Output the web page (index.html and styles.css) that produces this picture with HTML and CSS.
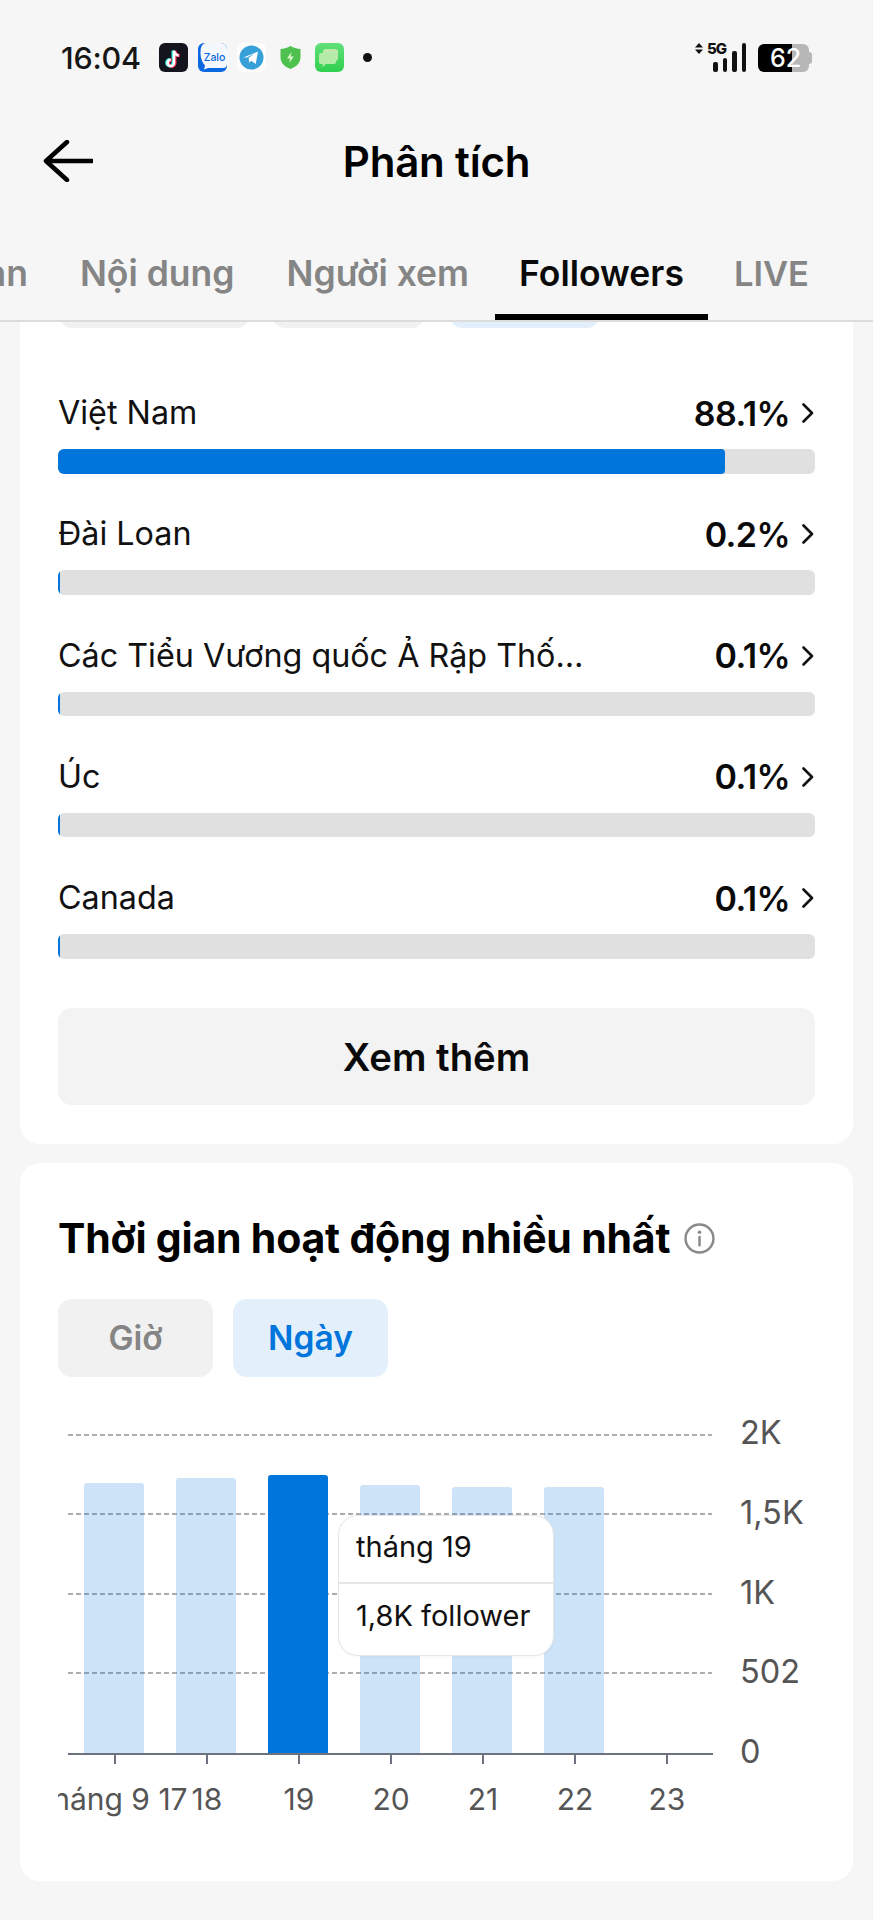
FILE: index.html
```html
<!DOCTYPE html>
<html lang="vi">
<head>
<meta charset="utf-8">
<title>Phân tích</title>
<link rel="stylesheet" href="styles.css">
</head>
<body>
<div class="screen">
  <header class="top">
    <div class="status">
      <span class="time">16:04</span>
      <div class="apps">
        <svg class="app" viewBox="0 0 29 29"><rect width="29" height="29" rx="6" fill="#14141f"/><path d="M15 7v12.2a3.2 3.2 0 1 1-3.2-3.2M15 7c.3 2.7 2 4.4 4.7 4.7" fill="none" stroke="#25f4ee" stroke-width="3" transform="translate(-1 .5)"/><path d="M15 7v12.2a3.2 3.2 0 1 1-3.2-3.2M15 7c.3 2.7 2 4.4 4.7 4.7" fill="none" stroke="#fe2c55" stroke-width="3" transform="translate(1 1)"/><path d="M15 7v12.2a3.2 3.2 0 1 1-3.2-3.2M15 7c.3 2.7 2 4.4 4.7 4.7" fill="none" stroke="#fff" stroke-width="2.6" transform="translate(0 .7)"/></svg>
        <svg class="app" viewBox="0 0 29 29"><path d="M6 0h17a6 6 0 0 1 6 6v17a6 6 0 0 1-6 6H6a6 6 0 0 1-6-6V6a6 6 0 0 1 6-6z" fill="#0a68e0"/><path d="M7 0h16a6 6 0 0 1 6 6v15a4 4 0 0 1-4 4H10l-4 1.500 1-4C3 18 2.500 13 2.500 9 2.500 4 4 1 7 0z" fill="#f4f7fb"/><text class="zalo" x="16.500" y="17.500" text-anchor="middle">Zalo</text></svg>
        <svg class="app" viewBox="0 0 29 29"><rect width="29" height="29" rx="6" fill="#fdfdfd"/><circle cx="14.500" cy="14.500" r="12" fill="#37a0d8"/><path d="M6.500 14.500 21 8.500 18.700 21l-4.500-3.300-2 2-.6-4.700 6.400-5.300-8 4.800z" fill="#fff"/></svg>
        <svg class="shield" viewBox="0 0 21 23"><path d="M10.500 0c3 1.700 6.500 2.800 10 3v8c0 6-4 9.800-10 12C4.500 20.800.500 17 .500 11V3c3.500-.2 7-1.300 10-3z" fill="#4fc14f"/><path d="M11.500 6 7 12.500h3L9.300 17l4.500-6.500h-3z" fill="#d9f7c8"/></svg>
        <svg class="app" viewBox="0 0 29 29"><defs><linearGradient id="msg" x1="0" y1="0" x2="0" y2="1"><stop offset="0" stop-color="#62e07a"/><stop offset="1" stop-color="#2fd04f"/></linearGradient></defs><rect width="29" height="29" rx="6" fill="url(#msg)"/><rect x="8" y="6" width="15" height="12" rx="3" fill="#bfe8ad"/><path d="M6 10h13a2 2 0 0 1 2 2v7a2 2 0 0 1-2 2h-8l-3.500 3v-3H6a2 2 0 0 1-2-2v-7a2 2 0 0 1 2-2z" fill="#b4eba8"/></svg>
        <span class="dot"></span>
      </div>
      <div class="sys">
        <svg class="arrows" viewBox="0 0 8 11"><path d="M4 0 8 4.500H0zM4 11 0 6.500h8z" fill="#111"/></svg>
        <div class="signal">
          <span class="net">5G</span>
          <div class="sig-bars">
            <i class="sig s1"></i><i class="sig s2"></i><i class="sig s3"></i><i class="sig s4"></i>
          </div>
        </div>
        <div class="battery">
          <span class="batt-fill"></span>
          <span class="batt-rest"></span>
          <span class="batt-num">62</span>
        </div>
      </div>
    </div>
    <div class="nav">
      <svg class="back" viewBox="0 0 50 42"><path d="M24 2 3 21l21 19M3 21h46" fill="none" stroke="#000" stroke-width="4.500" stroke-linecap="round" stroke-linejoin="round"/></svg>
      <h1 class="title">Phân tích</h1>
    </div>
    <nav class="tabs">
      <span class="tab">Tổng quan</span>
      <span class="tab">Nội dung</span>
      <span class="tab">Người xem</span>
      <span class="tab tab-on">Followers</span>
      <span class="tab">LIVE</span>
    </nav>
  </header>

  <main class="content">
    <section class="card card-regions">
      <div class="peek">
        <span class="peek-chip p1"></span>
        <span class="peek-chip p2"></span>
        <span class="peek-chip p3"></span>
      </div>
      <ul class="regions">
        <li class="region">
          <div class="region-head"><span class="region-name">Việt Nam</span><b class="region-val">88.1%</b><svg class="chev" viewBox="0 0 12 20"><path d="M1.500 1.500l8.500 8.500-8.500 8.500" fill="none" stroke="#111" stroke-width="2.600" stroke-linecap="round" stroke-linejoin="round"/></svg></div>
          <div class="track"><div class="fill" style="width:88.1%"></div></div>
        </li>
        <li class="region">
          <div class="region-head"><span class="region-name">Đài Loan</span><b class="region-val">0.2%</b><svg class="chev" viewBox="0 0 12 20"><path d="M1.500 1.500l8.500 8.500-8.500 8.500" fill="none" stroke="#111" stroke-width="2.600" stroke-linecap="round" stroke-linejoin="round"/></svg></div>
          <div class="track"><div class="fill" style="width:0.2%"></div></div>
        </li>
        <li class="region">
          <div class="region-head"><span class="region-name">Các Tiểu Vương quốc Ả Rập Thống nhất</span><b class="region-val">0.1%</b><svg class="chev" viewBox="0 0 12 20"><path d="M1.500 1.500l8.500 8.500-8.500 8.500" fill="none" stroke="#111" stroke-width="2.600" stroke-linecap="round" stroke-linejoin="round"/></svg></div>
          <div class="track"><div class="fill" style="width:0.1%"></div></div>
        </li>
        <li class="region">
          <div class="region-head"><span class="region-name">Úc</span><b class="region-val">0.1%</b><svg class="chev" viewBox="0 0 12 20"><path d="M1.500 1.500l8.500 8.500-8.500 8.500" fill="none" stroke="#111" stroke-width="2.600" stroke-linecap="round" stroke-linejoin="round"/></svg></div>
          <div class="track"><div class="fill" style="width:0.1%"></div></div>
        </li>
        <li class="region">
          <div class="region-head"><span class="region-name">Canada</span><b class="region-val">0.1%</b><svg class="chev" viewBox="0 0 12 20"><path d="M1.500 1.500l8.500 8.500-8.500 8.500" fill="none" stroke="#111" stroke-width="2.600" stroke-linecap="round" stroke-linejoin="round"/></svg></div>
          <div class="track"><div class="fill" style="width:0.1%"></div></div>
        </li>
      </ul>
      <button class="more"><span class="more-text">Xem thêm</span></button>
    </section>

    <section class="card card-active">
      <div class="heading">
        <h2 class="heading-text">Thời gian hoạt động nhiều nhất</h2>
        <svg class="info" viewBox="0 0 30 30"><circle cx="15" cy="15" r="13.500" fill="none" stroke="#8a8a8a" stroke-width="2.400"/><circle cx="15" cy="9" r="1.700" fill="#8a8a8a"/><path d="M15 13.500v8" stroke="#8a8a8a" stroke-width="2.400" stroke-linecap="round"/></svg>
      </div>
      <div class="switch">
        <span class="chip">Giờ</span>
        <span class="chip chip-on">Ngày</span>
      </div>
      <div class="chart">
        <div class="chart-main">
          <div class="plot">
            <div class="grid-lines"><i class="gl"></i><i class="gl"></i><i class="gl"></i><i class="gl"></i></div>
            <div class="bars">
              <div class="slot"><div class="bar" style="height:270px"></div></div>
              <div class="slot"><div class="bar" style="height:275px"></div></div>
              <div class="slot"><div class="bar bar-on" style="height:278px"></div></div>
              <div class="slot"><div class="bar" style="height:268px"></div></div>
              <div class="slot"><div class="bar" style="height:266px"></div></div>
              <div class="slot"><div class="bar" style="height:266px"></div></div>
              <div class="slot"></div>
            </div>
            <div class="tooltip">
              <div class="tip-row tip-date">tháng 19</div>
              <div class="tip-row">1,8K follower</div>
            </div>
          </div>
          <div class="xaxis">
            <div class="xcell"><i class="tick"></i><span class="xlabel">tháng 9 17</span></div>
            <div class="xcell"><i class="tick"></i><span class="xlabel">18</span></div>
            <div class="xcell"><i class="tick"></i><span class="xlabel">19</span></div>
            <div class="xcell"><i class="tick"></i><span class="xlabel">20</span></div>
            <div class="xcell"><i class="tick"></i><span class="xlabel">21</span></div>
            <div class="xcell"><i class="tick"></i><span class="xlabel">22</span></div>
            <div class="xcell"><i class="tick"></i><span class="xlabel">23</span></div>
          </div>
        </div>
        <div class="yaxis">
          <span class="ylabel">2K</span>
          <span class="ylabel">1,5K</span>
          <span class="ylabel">1K</span>
          <span class="ylabel">502</span>
          <span class="ylabel">0</span>
        </div>
      </div>
    </section>
  </main>
</div>
</body>
</html>
```
FILE: styles.css
```css
* { box-sizing: border-box; }
html, body { margin: 0; padding: 0; }
body {
  background: #f6f6f6;
  color: #000;
  font-family: Inter, "Noto Sans", "Liberation Sans", sans-serif;
}
.screen { width: 873px; height: 1920px; overflow: hidden; }

/* header */
.top { height: 322px; display: flex; flex-direction: column; }
.status {
  height: 114px;
  display: flex;
  align-items: center;
  padding: 0 61px 0 61px;
}
.time { width: 98px; font-size: 30.5px; font-weight: 500; color: #161616; letter-spacing: -0.2px; }
.apps { display: flex; align-items: center; gap: 10px; }
.app { width: 29px; height: 29px; display: block; }
.shield { width: 21px; height: 23px; display: block; margin: 0 4px; }
.dot { width: 9px; height: 9px; border-radius: 50%; background: #111; margin-left: 9px; }
.zalo { font: 500 10.5px Inter, sans-serif; fill: #0a68e0; }
.sys { margin-left: auto; display: flex; align-items: flex-start; height: 29px; }
.arrows { width: 8px; height: 11px; margin-right: 4px; display: block; }
.signal { position: relative; width: 49px; height: 29px; margin-right: 2px; }
.net {
  position: absolute; left: 0; top: -3px;
  font-size: 15px; font-weight: 800; letter-spacing: -1px; color: #111; line-height: 17px;
}
.sig-bars { height: 29px; display: flex; align-items: flex-end; gap: 5px; padding-left: 6px; }
.sig { width: 4.5px; background: #111; border-radius: 2px; display: block; }
.s1 { height: 10px; }
.s2 { height: 14px; }
.s3 { height: 21px; }
.s4 { height: 29px; }
.battery { position: relative; width: 54px; height: 28px; display: flex; margin-top: 1px; }
.batt-fill { width: 34px; background: #000; border-radius: 6px 0 0 6px; }
.batt-rest { width: 17px; background: #b7b7b7; border-radius: 0 6px 6px 0; position: relative; }
.batt-rest::after {
  content: ""; position: absolute; right: -3px; top: 8px;
  width: 3px; height: 12px; background: #b7b7b7; border-radius: 0 3px 3px 0;
}
.batt-num {
  position: absolute; left: 12px; top: 0; width: 28px; text-align: center;
  color: #fff; font-size: 25px; font-weight: 500; line-height: 28px;
}

.nav { height: 96px; position: relative; display: flex; align-items: center; justify-content: center; }
.back { position: absolute; left: 43px; top: 26px; width: 50px; height: 42px; }
.title { margin: 0; font-size: 42px; font-weight: 600; line-height: 48px; letter-spacing: -0.2px; }

.tabs {
  flex: 1;
  display: flex;
  justify-content: flex-end;
  align-items: stretch;
  overflow: hidden;
  padding: 0 38px 0 0;
  border-bottom: 2px solid #dcdcdc;
}
.tab {
  flex: none;
  padding: 0 26px;
  margin-bottom: -1px;
  font-size: 35.5px;
  font-weight: 600;
  color: #858585;
  line-height: 128px;
  height: 110px;
  white-space: nowrap;
}
.tab:last-child { font-size: 34.5px; }
.tab-on { color: #0a0a0a; border-bottom: 6px solid #000; height: 110px; margin-bottom: 1px; padding: 0 24px; }

/* cards */
.content { display: flex; flex-direction: column; gap: 19px; padding: 0 20px; }
.card { background: #fff; border-radius: 20px; }
.card-regions { height: 822px; border-radius: 0 0 20px 20px; padding: 0 38px; }
.card-active { height: 718px; padding: 0 38px; }

.peek { height: 6px; overflow: hidden; display: flex; align-items: flex-end; }
.peek-chip { height: 40px; border-radius: 12px; flex: none; }
.p1 { width: 189px; margin-left: 2px; background: #f1f1f1; }
.p2 { width: 151px; margin-left: 24px; background: #f1f1f1; }
.p3 { width: 149px; margin-left: 26px; background: #e3f0fb; }

.regions { list-style: none; margin: 61px 0 0; padding: 0; display: flex; flex-direction: column; gap: 36.8px; }
.region-head { display: flex; align-items: center; height: 48px; margin-bottom: 12px; }
.region-name {
  width: 530px;
  font-size: 32.3px;
  line-height: 50px;
  height: 50px;
  color: #111;
  white-space: nowrap;
  overflow: hidden;
  text-overflow: ellipsis;
}
.region-val { margin-left: auto; font-size: 34px; font-weight: 600; color: #0a0a0a; letter-spacing: -0.6px; }
.chev { width: 12px; height: 20px; margin-left: 12px; flex: none; margin-right: 1px; }
.track { height: 24.5px; background: #e0e0e0; border-radius: 6px; overflow: hidden; }
.fill { height: 100%; min-width: 1.5px; background: #0075dc; border-radius: 0 4px 4px 0; }
.more {
  display: block;
  width: 100%;
  height: 97px;
  margin-top: 49px;
  padding: 2px 0 0;
  border: 0;
  border-radius: 14px;
  background: #f3f3f3;
  color: #0a0a0a;
  font-family: inherit;
  font-size: 38.3px;
  font-weight: 600;
}

.heading { display: flex; align-items: center; padding-top: 50px; height: 100px; }
.heading-text { margin: 0; font-size: 41px; font-weight: 700; line-height: 50px; white-space: nowrap; letter-spacing: -0.2px; }
.info { width: 31px; height: 31px; margin-left: 14px; flex: none; }

.switch { display: flex; gap: 20px; margin-top: 36px; }
.chip {
  width: 155px; height: 78px; border-radius: 14px;
  background: #f1f1f1; color: #858585;
  font-size: 33.5px; font-weight: 600;
  display: flex; align-items: center; justify-content: center;
}
.chip-on { background: #e3f0fb; color: #0075dc; }

.chart { display: flex; margin-top: 57px; }
.chart-main { width: 655px; }
.plot { position: relative; width: 645px; margin-left: 10px; height: 321px; border-bottom: 2px solid #6b7280; }
.grid-lines { position: absolute; inset: 0 1px 0 0; }
.gl {
  display: block;
  height: 79.3px;
  background: repeating-linear-gradient(90deg, #adadad 0 5px, transparent 5px 8px) top / 100% 2px no-repeat;
}
.bars { position: absolute; inset: 0; display: grid; grid-template-columns: repeat(7, 92px); }
.slot { display: flex; align-items: flex-end; justify-content: center; }
.bar { width: 60px; background: rgba(0, 117, 220, 0.2); border-radius: 3px 3px 0 0; }
.bar-on { background: #0075dc; }
.tooltip {
  position: absolute; left: 270px; top: 81px; width: 216px; height: 141px;
  background: #fff; border: 1px solid #e6e6e6; border-radius: 20px;
  box-shadow: 0 1px 3px rgba(0,0,0,.04);
  font-size: 29px; color: #111;
}
.tip-row { height: 72px; padding-left: 17px; line-height: 63px; white-space: nowrap; }
.tip-date { height: 68px; line-height: 61px; border-bottom: 2px solid #e6e6e6; }

.xaxis { display: flex; padding-left: 11px; overflow: hidden; width: 665px; }
.xcell { flex: none; width: 92px; display: flex; flex-direction: column; align-items: center; }
.tick { display: block; width: 2px; height: 9px; background: #6b7280; }
.xlabel { margin-top: 12px; font-size: 30px; line-height: 46px; color: #555; white-space: nowrap; }

.yaxis {
  margin-top: -21px; margin-left: 27px; height: 359px;
  display: flex; flex-direction: column; justify-content: space-between;
}
.ylabel { font-size: 32.5px; line-height: 40px; color: #555; }
```
